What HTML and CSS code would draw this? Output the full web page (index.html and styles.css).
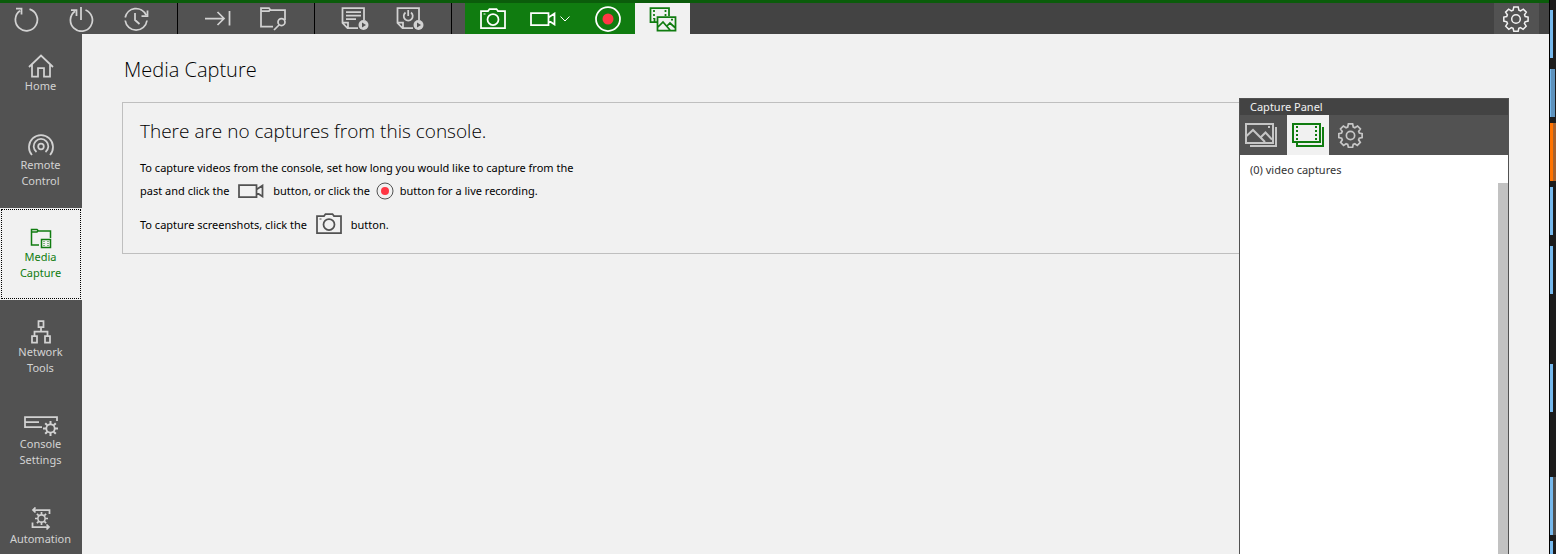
FILE: index.html
```
<!DOCTYPE html>
<html lang="en">
<head>
    <meta charset="UTF-8">
    <title>Media Capture</title>
    <link rel="stylesheet" href="styles.css">
</head>
<body>
    <!-- shared icons -->
    <svg class="defs" aria-hidden="true">
        <symbol id="gear" viewBox="0 0 26 26">
            <path d="M10.800 1h4.400l.7 3.200 1.600.7L20.300 3.100l3 3-1.800 2.700.7 1.700 2.900.6v4l-3 .7-.7 1.700 1.800 2.700-3.100 3.100-2.600-1.700-1.700.7-.6 2.900h-4.400l-.7-2.900-1.700-.7-2.600 1.700-3.100-3.100 1.800-2.700-.7-1.700-3-.7v-4l2.900-.6.7-1.700-1.800-2.700 3-3 2.800 1.800 1.700-.7z"/>
            <circle cx="13" cy="13" r="4.300"/>
        </symbol>
        <symbol id="cog" viewBox="0 0 15 15">
            <circle cx="7.500" cy="7.500" r="4.200" stroke-width="1.800"/>
            <path d="M7.500 0v3M7.500 12v3M0 7.500h3M12 7.500h3M2.200 2.200l2.100 2.100M10.700 10.700l2.100 2.100M2.200 12.800l2.100-2.100M10.700 4.300l2.100-2.100" stroke-width="2"/>
        </symbol>
        <symbol id="camera" viewBox="0 0 26 22">
            <path d="M1 3h7l1.500-2h7L18 3h7v17H1z"/>
            <circle cx="13" cy="11.500" r="5.500"/>
            <path d="M3.500 6h2" stroke-width="1"/>
        </symbol>
        <symbol id="video" viewBox="0 0 26 14">
            <path d="M1 1h17.500v12H1zM18.500 5.500L24.500 1.500v11L18.500 8.500"/>
        </symbol>
    </svg>

    <div class="window">
        <header class="toolbar">
            <div class="group">
                <button class="tool" aria-label="Restart"><svg width="26" height="26"><path d="M16.500 3.200A11 11 0 1 1 7 4.800M3 2.500h5.500v6"/></svg></button>
                <button class="tool" aria-label="Power"><svg width="26" height="26"><path d="M17.500 4A11 11 0 1 1 7 5.300M3 4h5.500v6M13 1v13"/></svg></button>
                <button class="tool" aria-label="History"><svg width="26" height="26"><path d="M2.200 11.500A11 11 0 0 1 23 9M24 14.500A11 11 0 0 1 2.200 14.500M24.500 4.500v5.500h-6M12 7v7l4.500 4"/></svg></button>
            </div>
            <div class="group">
                <button class="tool" aria-label="Run to end"><svg width="26" height="26"><path d="M0 12.500h19M12.500 6l6.500 6.500-6.500 6.500M24.500 5v14.500"/></svg></button>
                <button class="tool" aria-label="Browse files"><svg width="26" height="26"><path d="M13 20.500H1V2h8l1.500 2H25v10M1 5h8l1.500-2"/><circle cx="21.500" cy="16" r="3.500"/><path d="M19 19l-5 5"/></svg></button>
            </div>
            <div class="group">
                <button class="tool" aria-label="Run script"><svg width="28" height="26"><path d="M17 22H6.500L1.500 17V2H23v12M1.500 16.500h5.500v5M5 6h15M5 9.500h15M5 13h10"/><circle class="solid" cx="22.500" cy="19" r="5"/><path class="play" d="M21 16.500v5l4-2.500z"/></svg></button>
                <button class="tool" aria-label="Run power script"><svg width="28" height="26"><path d="M17 22H6.500L1.500 17V2H23v12M1.500 16.500h5.500v5M9.500 6.500a4.500 4.500 0 1 0 5.500 0M12.200 4v6"/><circle class="solid" cx="22.500" cy="19" r="5"/><path class="play" d="M21 16.500v5l4-2.500z"/></svg></button>
            </div>
            <div class="group capture">
                <button class="tool" aria-label="Take screenshot"><svg width="26" height="22"><use href="#camera"/></svg></button>
                <button class="tool wide" aria-label="Capture video"><svg width="26" height="14"><use href="#video"/></svg><svg width="10" height="6"><path d="M.5.5L5 5 9.500.5" stroke-width="1"/></svg></button>
                <button class="tool" aria-label="Record"><svg width="26" height="26"><circle cx="13" cy="13" r="12"/><circle class="rec" cx="13" cy="13" r="5.500"/></svg></button>
                <button class="tool active" aria-label="Captures"><svg width="28" height="26"><path d="M8 16H1.500V2H20v8M5.500 12v4"/><path d="M5 4v9M16.500 4v6" stroke-dasharray="2 2"/><path d="M8.500 11H26.500V24.500H8.500zM9 21l5-5 7 8M18 20l3-3 5.500 5M22 13.500h2"/></svg></button>
            </div>
            <button class="tool settings" aria-label="Settings"><svg class="thin" width="26" height="26"><use href="#gear"/></svg></button>
        </header>

        <div class="body">
            <nav class="sidebar">
                <a href="#"><svg width="26" height="24"><path d="M1 13L13 1.500 25 13M4 10.500V22.500h6V14h6v8.500h6V10.500"/></svg>Home</a>
                <a href="#"><svg width="26" height="24"><circle cx="13" cy="13.500" r="2.800"/><path d="M8.500 19A7.300 7.300 0 1 1 17.500 19M4 22A12 12 0 1 1 22 22"/></svg>Remote<br>Control</a>
                <a href="#" class="active"><svg width="22" height="21"><path d="M9 17H1.500V1.500H7L8.500 3H20.500v7M1.500 4H7L8.500 2" stroke-width="1.500"/><path d="M11.500 11.500h9v8h-9z" stroke-width="1.500"/><path d="M14 13v5M18 13v5" stroke-width="1" stroke-dasharray="1 1"/></svg>Media<br>Capture</a>
                <a href="#"><svg width="20" height="24"><path d="M7.500 1h5v6h-5zM1 16h5v6.500H1zM14 16h5v6.500h-5zM10 7v4.500M3.500 16v-4.500h13V16"/></svg>Network<br>Tools</a>
                <a href="#"><svg width="34" height="21"><path d="M18 12H1V2H33V6M1 7h14"/><svg x="19" y="6" width="15" height="15"><use href="#cog"/></svg></svg>Console<br>Settings</a>
                <a href="#"><svg width="20" height="24"><path d="M18.500 7V3H2M4.500.5L2 3 4.500 5.500M1.500 15.500V20H18M15.500 17.500L18 20l-2.500 2.500"/><svg x="4" y="5" width="13" height="13"><use href="#cog"/></svg></svg>Automation</a>
            </nav>

            <main class="content">
                <h1>Media Capture</h1>
                <section class="empty">
                    <h2>There are no captures from this console.</h2>
                    <p>To capture videos from the console, set how long you would like to capture from the<br>
                    past and click the <svg width="26" height="14"><use href="#video"/></svg> button, or click the <svg class="inline-rec" width="18" height="18"><circle cx="9" cy="9" r="8" stroke-width="1"/><circle class="rec" cx="9" cy="9" r="4"/></svg> button for a live recording.</p>
                    <p>To capture screenshots, click the <svg class="inline-camera" width="26" height="22"><use href="#camera"/></svg> button.</p>
                </section>

                <aside class="panel">
                    <h3>Capture Panel</h3>
                    <div class="tabs">
                        <button aria-label="Screenshots"><svg width="34" height="26"><path d="M2 2H29V21H2zM2.500 14l6.500-6 12 12M17 15l4.500-4.500 6.500 7M24 5h2"/><path d="M32 5v19H6"/></svg></button>
                        <button class="active" aria-label="Videos"><svg width="34" height="26"><path d="M2 2H29V20H2z"/><path d="M6 4v16M25 4v16" stroke-dasharray="2 2"/><path d="M32 5v19H6V21"/></svg></button>
                        <button aria-label="Capture settings"><svg class="thin" width="25" height="25"><use href="#gear"/></svg></button>
                    </div>
                    <div class="list">
                        <span>(0) video captures</span>
                        <div class="scroll"></div>
                    </div>
                </aside>
            </main>
        </div>
    </div>

    <div class="desktop">
        <i class="bar"></i>
        <i class="bar lit"></i>
        <i class="bar orange"></i>
        <i class="bar"></i>
        <i class="bar"></i>
        <i class="bar far"></i>
        <i class="bar tall"></i>
        <i class="bar"></i>
    </div>
</body>
</html>
```

FILE: styles.css
```
* {
    box-sizing: border-box;
}
body {
    margin: 0;
    height: 100vh;
    display: flex;
    overflow: hidden;
    background: #1c1c1c;
    color: #000;
    font-family: "Noto Sans", "Open Sans", sans-serif;
    font-size: 11px;
}
.defs {
    position: absolute;
    width: 0;
    height: 0;
}
svg {
    fill: none;
    stroke: currentColor;
    stroke-width: 1.75;
    flex: none;
}
button {
    border: 0;
    padding: 0;
    background: none;
    color: inherit;
    display: flex;
    align-items: center;
    justify-content: center;
}
.rec {
    fill: #ff3644;
    stroke: none;
}
.window {
    flex: 1;
    display: flex;
    flex-direction: column;
    background: #f1f1f1;
    border-right: 1px solid #000;
}

/* top toolbar */
.toolbar {
    display: flex;
    height: 34px;
    background: #434343;
    border-top: 3px solid #0b5c0b;
    color: #d2d2d2;
}
.toolbar .thin {
    stroke-width: 1.5;
}
.group {
    display: flex;
    background: #525252;
    padding: 0 13px;
    border-right: 1px solid #000;
}
.group:first-child {
    padding-left: 0;
    margin-left: -1px;
}
.tool {
    width: 55px;
    padding-right: 1px;
}
.capture {
    padding: 0 0 0 13px;
    border: 0;
}
.capture .tool {
    padding: 0;
    background: #107c10;
    color: #fff;
}
.capture .wide {
    width: 60px;
    gap: 4px;
}
.capture .active {
    background: #f1f1f1;
    color: #107c10;
}
.solid {
    fill: currentColor;
    stroke: none;
}
.play {
    fill: #525252;
    stroke: none;
}
.settings {
    width: 45px;
    margin: 0 10px 0 auto;
    background: #525252;
    color: #f1f1f1;
}

/* left menu */
.body {
    flex: 1;
    display: flex;
    min-height: 0;
}
.sidebar {
    width: 82px;
    background: #525252;
    overflow: hidden;
}
.sidebar a {
    display: flex;
    flex-direction: column;
    align-items: center;
    padding: 20px 1px 19px 0;
    color: #d2d2d2;
    line-height: 16px;
    text-align: center;
    text-decoration: none;
}
.sidebar .active {
    background: #f1f1f1;
    color: #107c10;
    outline: 1px dotted #000;
    outline-offset: -2px;
}

/* page */
.content {
    flex: 1;
    position: relative;
    padding: 0 40px;
}
h1, h2 {
    margin: 0;
    font-family: "Open Sans", "Noto Sans", sans-serif;
    font-size: 20px;
    font-weight: 300;
    line-height: 28px;
}
h1 {
    padding: 22px 2px 18px;
}
h2 {
    font-size: 19px;
}
.empty {
    border: 1px solid #bfbfbf;
    padding: 14px 17px 17px;
    white-space: nowrap;
}
.empty p {
    margin: 11px 0 0;
    line-height: 23px;
}
.empty p svg {
    vertical-align: -3px;
    color: #525252;
    margin: 0 6px;
}
.empty p .inline-rec {
    vertical-align: -5px;
    margin: 0 3px;
}
.empty p .inline-camera {
    vertical-align: -6px;
}

/* floating capture panel */
.panel {
    position: absolute;
    top: 64px;
    right: 40px;
    bottom: 0;
    width: 270px;
    display: flex;
    flex-direction: column;
    background: #fff;
    border: 1px solid #525252;
    border-bottom: 0;
}
.panel h3 {
    margin: 0;
    padding-left: 10px;
    background: #434343;
    color: #f1f1f1;
    font-size: 11px;
    font-weight: 400;
    line-height: 16px;
}
.tabs {
    display: flex;
    height: 40px;
    background: #525252;
    color: #c6c6c6;
}
.tabs button {
    width: 42px;
}
.tabs svg {
    stroke-width: 2;
}
.tabs .thin {
    stroke-width: 1.75;
}
.tabs button:first-child {
    width: 47px;
    padding-right: 5px;
}
.tabs .active {
    background: #f1f1f1;
    color: #107c10;
}
.list {
    flex: 1;
    display: flex;
    justify-content: space-between;
    padding-left: 10px;
    color: #333;
    line-height: 30px;
}
.scroll {
    width: 10px;
    margin-top: 28px;
    background: #c2c2c2;
}

/* sliver of the desktop behind the window */
.desktop {
    width: 6px;
    padding-top: 10px;
    overflow: hidden;
}
.bar {
    display: block;
    width: 3px;
    height: 48px;
    margin-bottom: 11px;
    background: #76b9ed;
}
.lit {
    width: 5px;
    margin-bottom: 6px;
    background: #5f93bd;
    border-left: 1px solid #76b9ed;
}
.orange {
    width: 6px;
    height: 58px;
    margin-bottom: 6px;
    background: #a8622d;
    border-left: 3px solid #ff7300;
}
.far {
    margin-top: 70px;
    margin-bottom: 65px;
}
.tall {
    width: 6px;
    height: 58px;
    margin-bottom: 6px;
    background: #505050;
    border-left: 3px solid #76b9ed;
}
```
